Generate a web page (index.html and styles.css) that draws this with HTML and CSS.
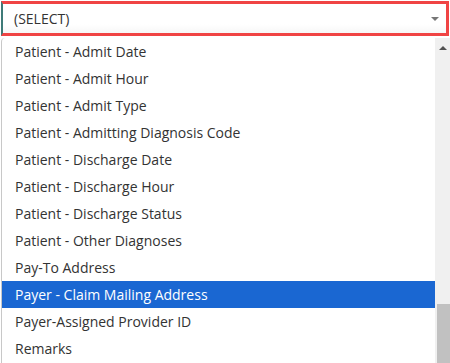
FILE: index.html
```html
<!DOCTYPE html>
<html>
<head>
<meta charset="utf-8">
<link rel="stylesheet" href="styles.css">
</head>
<body>
<div class="select">
  <span class="select-value">(SELECT)</span>
  <span class="caret"></span>
</div>
<div class="dropdown">
  <ul class="options">
    <li class="option">Patient - Admit Date</li>
    <li class="option">Patient - Admit Hour</li>
    <li class="option">Patient - Admit Type</li>
    <li class="option">Patient - Admitting Diagnosis Code</li>
    <li class="option">Patient - Discharge Date</li>
    <li class="option">Patient - Discharge Hour</li>
    <li class="option">Patient - Discharge Status</li>
    <li class="option">Patient - Other Diagnoses</li>
    <li class="option">Pay-To Address</li>
    <li class="option selected">Payer - Claim Mailing Address</li>
    <li class="option">Payer-Assigned Provider ID</li>
    <li class="option">Remarks</li>
  </ul>
  <div class="scrollbar">
    <span class="arrow-up"></span>
    <div class="thumb"></div>
  </div>
</div>
</body>
</html>
```
FILE: styles.css
```css
html, body {
  margin: 0;
  padding: 0;
  background: #fff;
  overflow: hidden;
}
body {
  width: 450px;
  height: 363px;
  font-family: "Open Sans", "Liberation Sans", sans-serif;
  font-size: 14px;
  color: #333;
}
.select {
  box-sizing: border-box;
  margin: 1px 1px 0 1px;
  height: 35px;
  border: 3px solid #f04444;
  border-left: 2px solid #3f7b78;
  display: flex;
  align-items: center;
  padding-left: 11px;
  padding-right: 7px;
  background: linear-gradient(#fff 70%, #f7f7f7);
}
.select-value {
  flex: 1;
  color: #333;
}
.caret {
  width: 0;
  height: 0;
  margin-top: 1px;
  border-left: 4px solid transparent;
  border-right: 4px solid transparent;
  border-top: 4px solid #777;
}
.dropdown {
  margin-top: 2px;
  margin-left: 1px;
  height: 326px;
  display: flex;
  border-left: 1px solid #c8c8c8;
  border-top-left-radius: 4px;
  overflow: hidden;
}
.options {
  list-style: none;
  margin: 0;
  padding: 0;
  flex: 1;
}
.option {
  height: 27px;
  line-height: 27px;
  padding-left: 13px;
  white-space: nowrap;
}
.option.selected {
  background: #1a67d2;
  color: #fff;
}
.scrollbar {
  width: 15px;
  background: #f0f0f0;
  display: flex;
  flex-direction: column;
  align-items: center;
}
.arrow-up {
  margin-top: 8px;
  width: 0;
  height: 0;
  border-left: 4px solid transparent;
  border-right: 4px solid transparent;
  border-bottom: 4px solid #505050;
}
.thumb {
  margin-top: auto;
  width: 13px;
  margin-left: 2px;
  height: 60px;
  background: #c1c1c1;
}
```
